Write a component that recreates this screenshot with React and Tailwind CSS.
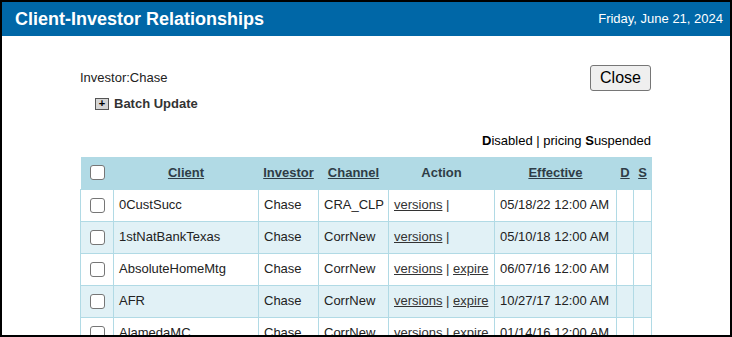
import React from 'react';

const rows = [
    { client: '0CustSucc', investor: 'Chase', channel: 'CRA_CLP', expire: false, effective: '05/18/22 12:00 AM' },
    { client: '1stNatBankTexas', investor: 'Chase', channel: 'CorrNew', expire: false, effective: '05/10/18 12:00 AM' },
    { client: 'AbsoluteHomeMtg', investor: 'Chase', channel: 'CorrNew', expire: true, effective: '06/07/16 12:00 AM' },
    { client: 'AFR', investor: 'Chase', channel: 'CorrNew', expire: true, effective: '10/27/17 12:00 AM' },
    { client: 'AlamedaMC', investor: 'Chase', channel: 'CorrNew', expire: true, effective: '01/14/16 12:00 AM' },
];

const Check = () => (
    <input
        type="checkbox"
        className="appearance-none block mx-auto w-[15px] h-[15px] border border-[#767676] rounded-[3px] bg-white"
    />
);

const App = () => {
    return (
        <div
            className="w-[732px] h-[337px] overflow-hidden border-2 border-black bg-white text-[13px] text-[#222]"
            style={{ fontFamily: '"Liberation Sans", Arial, sans-serif' }}
        >
            {/* title bar */}
            <div className="h-[34px] bg-[#0067a7] flex items-center justify-between pl-[13px] pr-[7px] text-white">
                <h1 className="text-[18px] font-bold">Client-Investor Relationships</h1>
                <span className="text-[13px]">Friday, June 21, 2024</span>
            </div>

            <div className="w-[571px] ml-[78px] pt-[29px]">
                <div className="flex items-center justify-between h-[26px]">
                    <span>Investor:Chase</span>
                    <button className="h-[26px] w-[61px] text-[16px] text-black bg-[#efefef] border border-[#767676] rounded-[3px]">
                        Close
                    </button>
                </div>

                <div className="flex items-center gap-[5px] pl-[15px] mt-[5px] h-[15px]">
                    <span className="w-[14px] h-[12px] flex items-center justify-center bg-[#d6d6d6] border border-[#555] text-[11px] leading-none font-bold text-black">
                        +
                    </span>
                    <span className="font-bold text-[#333]">Batch Update</span>
                </div>

                <div className="text-right mt-[22px] leading-[15px] text-black">
                    <b>D</b>isabled | pricing <b>S</b>uspended
                </div>

                <table className="mt-[9px] w-[571px] table-fixed border-collapse">
                    <colgroup>
                        <col className="w-[33px]" />
                        <col className="w-[145px]" />
                        <col className="w-[60px]" />
                        <col className="w-[70px]" />
                        <col className="w-[106px]" />
                        <col className="w-[122px]" />
                        <col className="w-[17px]" />
                        <col className="w-[18px]" />
                    </colgroup>
                    <thead>
                        <tr className="h-[32px] bg-[#b1dae5] text-[#2f3d47] font-bold">
                            <th className="p-0"><Check /></th>
                            <th className="underline font-bold">Client</th>
                            <th className="underline font-bold">Investor</th>
                            <th className="underline font-bold">Channel</th>
                            <th className="font-bold">Action</th>
                            <th className="underline font-bold">Effective</th>
                            <th className="underline font-bold">D</th>
                            <th className="underline font-bold">S</th>
                        </tr>
                    </thead>
                    <tbody>
                        {rows.map((r, i) => (
                            <tr
                                key={r.client}
                                className={`h-[32px] ${i % 2 === 1 ? 'bg-[#e1f1f6]' : 'bg-white'}`}
                            >
                                <td className="border border-[#b1dae5] p-0"><Check /></td>
                                <td className="border border-[#b1dae5] px-[5px] whitespace-nowrap">{r.client}</td>
                                <td className="border border-[#b1dae5] px-[5px]">{r.investor}</td>
                                <td className="border border-[#b1dae5] px-[5px]">{r.channel}</td>
                                <td className="border border-[#b1dae5] px-[5px] whitespace-nowrap text-[#333]">
                                    <a className="underline">versions</a>
                                    {' | '}
                                    {r.expire && <a className="underline">expire</a>}
                                </td>
                                <td className="border border-[#b1dae5] px-[5px] whitespace-nowrap">{r.effective}</td>
                                <td className="border border-[#b1dae5]"></td>
                                <td className="border border-[#b1dae5]"></td>
                            </tr>
                        ))}
                    </tbody>
                </table>
            </div>
        </div>
    );
};

export default App;
